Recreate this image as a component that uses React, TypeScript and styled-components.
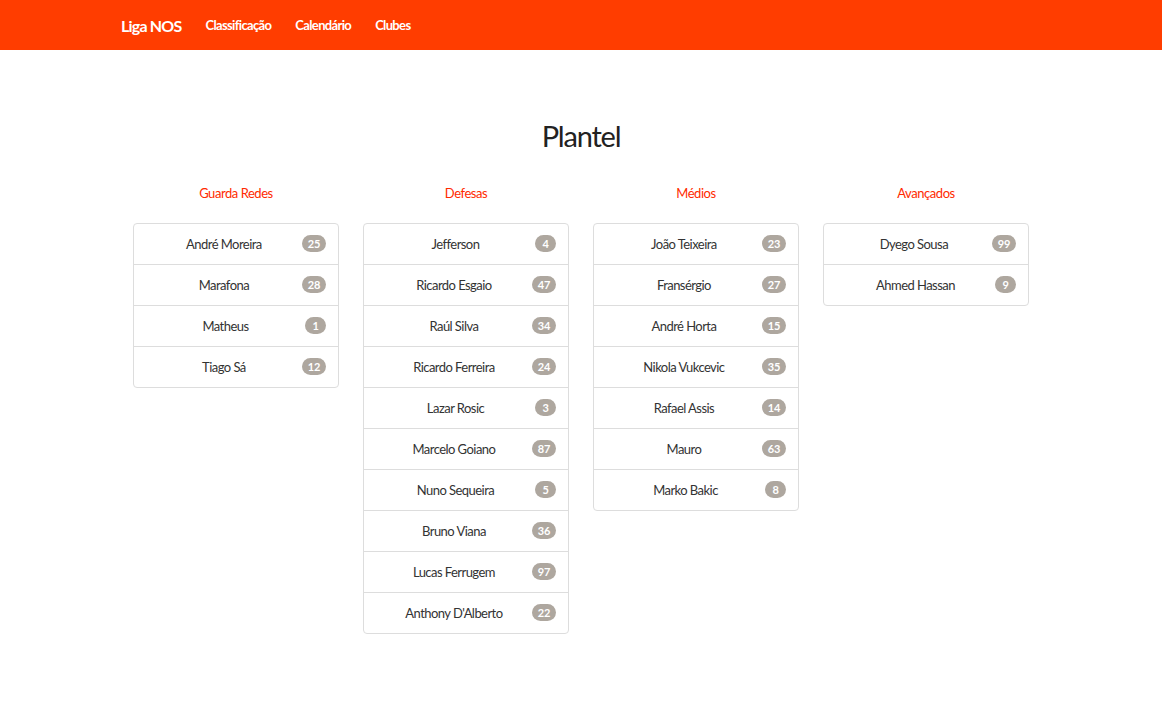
import React from "react";
import styled, { createGlobalStyle } from "styled-components";

const Global = createGlobalStyle`
  html, body { margin: 0; padding: 0; background: #fff; }
  body { font-family: Lato, "Open Sans", sans-serif; color: #333; font-size: 13px; }
`;

const NavBar = styled.nav`
  height: 50px;
  background: #ff3d00;
`;

const NavInner = styled.div`
  width: 920px;
  margin: 0 auto;
  height: 100%;
  display: flex;
  align-items: center;
  gap: 24px;
`;

const Brand = styled.a`
  color: #fff;
  font-size: 16px;
  font-weight: 700;
  letter-spacing: -0.8px;
  text-decoration: none;
`;

const NavLink = styled.a`
  color: #fff;
  font-size: 13px;
  font-weight: 700;
  letter-spacing: -0.65px;
  text-decoration: none;
`;

const Main = styled.main`
  width: 920px;
  margin: 0 auto;
  padding-top: 66px;
`;

const Title = styled.h1`
  margin: 0;
  text-align: center;
  font-size: 29px;
  font-weight: 400;
  letter-spacing: -1.2px;
  line-height: 40px;
  color: #222;
`;

const Columns = styled.div`
  display: grid;
  grid-template-columns: repeat(4, 230px);
  margin-top: 27px;
`;

const Column = styled.section`
  padding: 0 12px;
`;

const Heading = styled.h4`
  margin: 0 0 20px;
  text-align: center;
  font-size: 13px;
  font-weight: 400;
  letter-spacing: -0.45px;
  line-height: 20px;
  color: #ff2a00;
`;

const List = styled.ul`
  list-style: none;
  margin: 0;
  padding: 0;
  border: 1px solid #ddd;
  border-radius: 4px;
`;

const Item = styled.li`
  height: 40px;
  display: flex;
  align-items: center;
  padding: 0 12px;
  color: #333;
  & + & { border-top: 1px solid #ddd; }
`;

const Name = styled.span`
  flex: 1;
  text-align: center;
  font-size: 13px;
  letter-spacing: -0.55px;
  padding-bottom: 1px;
`;

const Badge = styled.span`
  min-width: 9px;
  height: 17px;
  padding: 0 6px;
  border-radius: 9px;
  background: #aea79f;
  color: #fff;
  font-size: 11px;
  font-weight: 700;
  letter-spacing: -0.3px;
  line-height: 17px;
  text-align: center;
  margin-bottom: 2px;
`;

type Player = [string, number];

const data: { title: string; players: Player[] }[] = [
  {
    title: "Guarda Redes",
    players: [["André Moreira", 25], ["Marafona", 28], ["Matheus", 1], ["Tiago Sá", 12]],
  },
  {
    title: "Defesas",
    players: [
      ["Jefferson", 4], ["Ricardo Esgaio", 47], ["Raúl Silva", 34], ["Ricardo Ferreira", 24],
      ["Lazar Rosic", 3], ["Marcelo Goiano", 87], ["Nuno Sequeira", 5], ["Bruno Viana", 36],
      ["Lucas Ferrugem", 97], ["Anthony D'Alberto", 22],
    ],
  },
  {
    title: "Médios",
    players: [
      ["João Teixeira", 23], ["Fransérgio", 27], ["André Horta", 15], ["Nikola Vukcevic", 35],
      ["Rafael Assis", 14], ["Mauro", 63], ["Marko Bakic", 8],
    ],
  },
  {
    title: "Avançados",
    players: [["Dyego Sousa", 99], ["Ahmed Hassan", 9]],
  },
];

export default function App() {
  return (
    <>
      <Global />
      <NavBar>
        <NavInner>
          <Brand href="#">Liga NOS</Brand>
          <NavLink href="#">Classificação</NavLink>
          <NavLink href="#">Calendário</NavLink>
          <NavLink href="#">Clubes</NavLink>
        </NavInner>
      </NavBar>
      <Main>
        <Title>Plantel</Title>
        <Columns>
          {data.map((g) => (
            <Column key={g.title}>
              <Heading>{g.title}</Heading>
              <List>
                {g.players.map(([n, num]) => (
                  <Item key={n}>
                    <Name>{n}</Name>
                    <Badge>{num}</Badge>
                  </Item>
                ))}
              </List>
            </Column>
          ))}
        </Columns>
      </Main>
    </>
  );
}
